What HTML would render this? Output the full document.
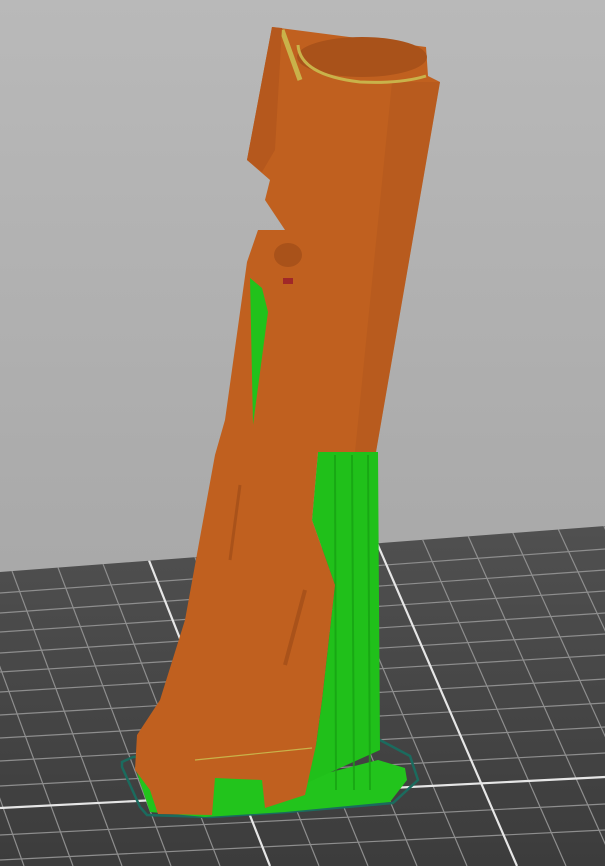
<!DOCTYPE html>
<html><head><meta charset="utf-8"><style>
html,body{margin:0;padding:0;width:605px;height:866px;overflow:hidden;background:#b0b0b0}
svg{display:block}
</style></head><body>
<svg width="605" height="866" viewBox="0 0 605 866" xmlns="http://www.w3.org/2000/svg">
<defs>
<linearGradient id="bg" x1="0" y1="0" x2="0" y2="1">
<stop offset="0" stop-color="#b9b9b9"/><stop offset="0.65" stop-color="#a9a9a9"/><stop offset="1" stop-color="#a0a0a0"/>
</linearGradient>
<linearGradient id="pl" x1="0" y1="0" x2="0" y2="1">
<stop offset="0" stop-color="#505050"/><stop offset="1" stop-color="#3c3c3c"/>
</linearGradient>
<clipPath id="pc"><polygon points="0,572 605,526 605,866 0,866"/></clipPath>
</defs>
<rect width="605" height="866" fill="url(#bg)"/>
<polygon points="0,572 605,526 605,866 0,866" fill="url(#pl)"/>
<g clip-path="url(#pc)" stroke="#8e8e8e" stroke-width="1.2" fill="none">
<line x1="0" y1="593" x2="605" y2="549"/>
<line x1="0" y1="613" x2="605" y2="570"/>
<line x1="0" y1="632" x2="605" y2="591"/>
<line x1="0" y1="653" x2="605" y2="613"/>
<line x1="0" y1="672" x2="605" y2="634"/>
<line x1="0" y1="692" x2="605" y2="655"/>
<line x1="0" y1="715" x2="605" y2="679"/>
<line x1="0" y1="738" x2="605" y2="703"/>
<line x1="0" y1="761" x2="605" y2="727"/>
<line x1="0" y1="786" x2="605" y2="753"/>
<line x1="0" y1="835" x2="605" y2="804"/>
<line x1="0" y1="860" x2="605" y2="830"/>
<line x1="-147" y1="520" x2="-26" y2="866"/>
<line x1="-100" y1="520" x2="24" y2="866"/>
<line x1="-54" y1="520" x2="73" y2="866"/>
<line x1="-7" y1="520" x2="122" y2="866"/>
<line x1="40" y1="520" x2="171" y2="866"/>
<line x1="86" y1="520" x2="220" y2="866"/>
<line x1="180" y1="520" x2="319" y2="866"/>
<line x1="226" y1="520" x2="368" y2="866"/>
<line x1="273" y1="520" x2="417" y2="866"/>
<line x1="320" y1="520" x2="467" y2="866"/>
<line x1="414" y1="520" x2="566" y2="866"/>
<line x1="461" y1="520" x2="615" y2="866"/>
<line x1="507" y1="520" x2="664" y2="866"/>
<line x1="554" y1="520" x2="714" y2="866"/>
<line x1="601" y1="520" x2="763" y2="866"/>
<g stroke="#e6e6e6" stroke-width="2.2">
<line x1="0" y1="808" x2="605" y2="777"/>
<line x1="133" y1="520" x2="270" y2="866"/>
<line x1="367" y1="520" x2="517" y2="866"/>
</g>
</g>
<polygon points="122,762 133,757 378,739 410,756 418,780 393,803 287,812 210,817 147,815 140,807 122,767" fill="none" stroke="#1b6b5e" stroke-width="2.5"/>
<polygon points="135,767 150,763 262,778 300,780 378,760 405,768 407,780 390,802 285,812 205,817 150,812" fill="#22c41c"/>
<polygon points="318,452 378,452 380,750 302,785 316,745 322,700 335,585 312,520" fill="#20c01a"/>
<g stroke="#17a313" stroke-width="2" opacity="0.8">
<line x1="335" y1="455" x2="336" y2="790"/><line x1="352" y1="455" x2="354" y2="790"/><line x1="368" y1="455" x2="370" y2="790"/>
</g>
<polygon points="272,27 426,47 428,76 440,82 376,452 318,452 312,520 335,585 322,700 316,745 305,795 265,808 262,780 215,778 212,815 158,814 150,790 135,770 137,735 160,700 185,620 215,455 225,420 247,262 258,230 285,230 265,200 270,180 247,160" fill="#c0601f"/>
<polygon points="392,82 440,82 376,452 355,452" fill="#b0561c" opacity="0.45"/>
<ellipse cx="362" cy="57" rx="65" ry="20" fill="#a9521a"/>
<path d="M298,45 Q300,75 360,82 Q400,84 426,76" fill="none" stroke="#c9b24a" stroke-width="3"/>
<path d="M282,30 L300,80" stroke="#c9b24a" stroke-width="5"/>
<polygon points="272,27 282,28 275,150 262,172 247,160" fill="#b5581d"/>
<polygon points="250,278 262,288 268,312 253,425" fill="#21c21b"/>
<ellipse cx="288" cy="255" rx="14" ry="12" fill="#a9521a"/>
<rect x="283" y="278" width="10" height="6" fill="#a02828"/>
<line x1="195" y1="760" x2="312" y2="748" stroke="#c9b24a" stroke-width="1.2"/>
<line x1="305" y1="590" x2="285" y2="665" stroke="#a9521a" stroke-width="4"/>
<line x1="240" y1="485" x2="230" y2="560" stroke="#a9521a" stroke-width="3"/>
</svg>
</body></html>
